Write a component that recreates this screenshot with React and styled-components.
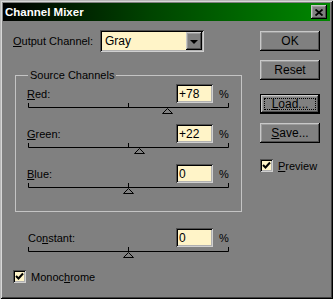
import React from 'react';
import styled, { createGlobalStyle, css } from 'styled-components';

const face = '#808080';
const cream = '#fff4c8';
const font = `"Liberation Sans", Arial, sans-serif`;

const GlobalStyle = createGlobalStyle`
  * { box-sizing: border-box; }
  body {
    margin: 0;
    background: ${face};
    font-family: ${font};
    font-size: 11px;
    color: #000;
  }
`;

const raised = css`
  box-shadow: inset -1px -1px #000, inset 1px 1px #c8c8c8, inset -2px -2px #505050, inset 2px 2px #9c9c9c;
`;
const sunken = css`
  box-shadow: inset 1px 1px #505050, inset -1px -1px #d0d0d0, inset 2px 2px #000, inset -2px -2px #b0b0b0;
`;

const Window = styled.div`
  width: 333px;
  height: 299px;
  padding: 3px;
  background: ${face};
  display: flex;
  flex-direction: column;
  box-shadow: inset 1px 1px #b8b8b8, inset -1px -1px #000, inset 2px 2px #d8d8d8, inset -2px -2px #404040;
`;

const TitleBar = styled.div`
  height: 18px;
  flex: none;
  display: flex;
  align-items: center;
  justify-content: space-between;
  padding: 0 3px 0 2px;
  background: linear-gradient(to right, #000 0%, #004400 45%, #008800 100%);
`;

const Title = styled.span`
  color: #fff;
  font-weight: bold;
  font-size: 11.5px;
`;

const CloseButton = styled.div`
  width: 16px;
  height: 14px;
  background: ${face};
  display: flex;
  align-items: center;
  justify-content: center;
  ${raised}
`;

const Body = styled.div`
  flex: 1;
  display: flex;
`;

const LeftCol = styled.div`
  flex: 0 0 257px;
  padding: 9px 0 0 10px;
  display: flex;
  flex-direction: column;
`;

const RightCol = styled.div`
  width: 60px;
  padding-top: 10px;
  display: flex;
  flex-direction: column;
`;

const OutputRow = styled.div`
  display: flex;
  align-items: center;
  height: 22px;
`;

const OutputLabel = styled.span`
  width: 87px;
`;

const Select = styled.div`
  width: 104px;
  height: 22px;
  background: ${cream};
  display: flex;
  align-items: center;
  padding: 0 2px 0 5px;
  font-size: 12px;
  ${sunken}
`;

const DropButton = styled.div`
  margin-left: auto;
  width: 16px;
  height: 18px;
  background: ${face};
  display: flex;
  align-items: center;
  justify-content: center;
  ${raised}
  &::before {
    content: '';
    border-left: 4px solid transparent;
    border-right: 4px solid transparent;
    border-top: 4px solid #000;
    margin-top: 1px;
  }
`;

const Group = styled.fieldset`
  margin: 17px 0 0 2px;
  width: 227px;
  border: 1px solid #c4c4c4;
  padding: 0 12px 14px 11px;
`;

const Legend = styled.legend`
  padding: 0 2px;
  margin-left: 1px;
  line-height: 13px;
`;

const Channel = styled.div`
  display: flex;
  flex-direction: column;
  margin-top: ${p => p.$first ? 2 : 7}px;
  margin-left: ${p => p.$indent || 0}px;
  width: ${p => p.$width ? `${p.$width}px` : 'auto'};
`;

const Row = styled.div`
  display: grid;
  grid-template-columns: 1fr 37px 16px;
  align-items: center;
  height: 19px;
`;

const ValueBox = styled.div`
  height: 19px;
  background: ${cream};
  padding: 0 3px;
  display: flex;
  align-items: center;
  font-size: 12px;
  ${sunken}
`;

const Percent = styled.span`
  padding-left: 6px;
`;

const SliderSvg = styled.svg`
  display: block;
  margin-left: ${p => p.$shift || 0}px;
`;

const ConstantBlock = styled(Channel)`
  margin-top: 16px;
`;

const CheckRow = styled.div`
  display: flex;
  align-items: center;
  gap: 5px;
  margin-top: ${p => p.$top}px;
`;

const Box = styled.div`
  width: 13px;
  height: 13px;
  background: ${cream};
  display: flex;
  align-items: center;
  justify-content: center;
  ${sunken}
`;

const Button = styled.div`
  position: relative;
  height: 20px;
  margin-top: ${p => p.$top || 0}px;
  background: ${face};
  display: flex;
  align-items: center;
  justify-content: center;
  font-size: 12px;
  ${raised}
  ${p => p.$default && css`
    border: 1px solid #000;
    &::after {
      content: '';
      position: absolute;
      inset: 3px;
      border: 1px dotted #000;
    }
  `}
`;

const Slider = ({ value, shift }) => {
  const w = 201;
  const x = Math.round(((value + 200) / 400) * (w - 1)) + 0.5;
  return (
    <SliderSvg width={w} height={14} $shift={shift}>
      <line x1="0.5" y1="4.5" x2={w - 0.5} y2="4.5" stroke="#000" />
      <line x1="0.5" y1="0" x2="0.5" y2="4.5" stroke="#000" />
      <line x1="100.5" y1="0" x2="100.5" y2="4.5" stroke="#000" />
      <line x1={w - 0.5} y1="0" x2={w - 0.5} y2="4.5" stroke="#000" />
      <polygon points={`${x},5.5 ${x - 5},10.5 ${x + 5},10.5`} fill={face} stroke="#000" />
    </SliderSvg>
  );
};

const Check = () => (
  <svg width="9" height="9" viewBox="0 0 9 9">
    <polyline points="1,4 3.5,6.5 8,1.5" fill="none" stroke="#000" strokeWidth="2" />
  </svg>
);

const channels = [
  { key: 'R', rest: 'ed:', value: 78, text: '+78' },
  { key: 'G', rest: 'reen:', value: 22, text: '+22' },
  { key: 'B', rest: 'lue:', value: 0, text: '0' },
];

export default function App() {
  return (
    <>
      <GlobalStyle />
      <Window>
        <TitleBar>
          <Title>Channel Mixer</Title>
          <CloseButton>
            <svg width="8" height="7" viewBox="0 0 8 7">
              <path d="M0.5 0.5 L7.5 6.5 M7.5 0.5 L0.5 6.5" stroke="#000" strokeWidth="1.8" />
            </svg>
          </CloseButton>
        </TitleBar>
        <Body>
          <LeftCol>
            <OutputRow>
              <OutputLabel><u>O</u>utput Channel:</OutputLabel>
              <Select>
                Gray
                <DropButton />
              </Select>
            </OutputRow>

            <Group>
              <Legend>Source Channels</Legend>
              {channels.map((c, i) => (
                <Channel key={c.key} $first={i === 0}>
                  <Row>
                    <span><u>{c.key}</u>{c.rest}</span>
                    <ValueBox>{c.text}</ValueBox>
                    <Percent>%</Percent>
                  </Row>
                  <Slider value={c.value} shift={1} />
                </Channel>
              ))}
            </Group>

            <ConstantBlock $indent={15} $width={201}>
              <Row>
                <span>Co<u>n</u>stant:</span>
                <ValueBox>0</ValueBox>
                <Percent>%</Percent>
              </Row>
              <Slider value={0} />
            </ConstantBlock>

            <CheckRow $top={9}>
              <Box><Check /></Box>
              <span>Monoc<u>h</u>rome</span>
            </CheckRow>
          </LeftCol>

          <RightCol>
            <Button>OK</Button>
            <Button $top={9}>Reset</Button>
            <Button $top={14} $default><span><u>L</u>oad...</span></Button>
            <Button $top={9}><span><u>S</u>ave...</span></Button>
            <CheckRow $top={16}>
              <Box><Check /></Box>
              <span><u>P</u>review</span>
            </CheckRow>
          </RightCol>
        </Body>
      </Window>
    </>
  );
}
